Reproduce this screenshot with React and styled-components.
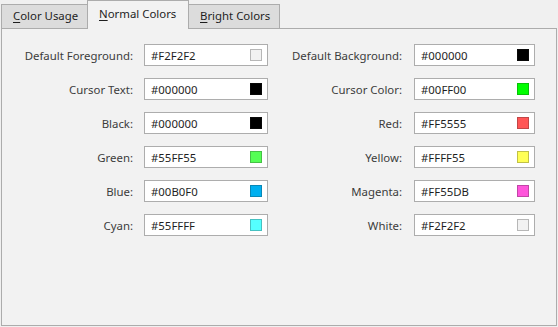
import React from "react";
import styled, { createGlobalStyle } from "styled-components";

const Global = createGlobalStyle`
  html, body { margin: 0; padding: 0; background: #f0f0f0; }
  body { font-family: "Noto Sans", "Liberation Sans", sans-serif; font-size: 11.4px; }
`;

const Window = styled.div`
  width: 558px;
  height: 327px;
  padding: 0 1px 1px 1px;
  box-sizing: border-box;
  display: flex;
  flex-direction: column;
  background: #f0f0f0;
`;

const TabBar = styled.div`
  display: flex;
  align-items: flex-end;
  height: 28px;
  flex: none;
`;

const Tab = styled.div`
  box-sizing: border-box;
  width: ${(p) => p.$w}px;
  height: ${(p) => (p.$active ? 29 : 24)}px;
  margin-left: ${(p) => (p.$first ? 0 : -1)}px;
  margin-bottom: ${(p) => (p.$active ? -1 : 0)}px;
  padding: ${(p) => (p.$active ? "4px" : "2px")} 0 0 11px;
  border: 1px solid #acacac;
  border-bottom: none;
  background: ${(p) => (p.$active ? "#f2f2f2" : "#dcdcdc")};
  color: #1e1e1e;
  font-size: 11.4px;
  line-height: 18px;
  position: relative;
  z-index: ${(p) => (p.$active ? 2 : 1)};
  white-space: nowrap;
  & u { text-underline-offset: 2px; }
`;

const Panel = styled.div`
  flex: 1;
  border: 1px solid #acacac;
  background: #f2f2f2;
  padding: 15px 0 0 0;
`;

const Grid = styled.div`
  display: grid;
  grid-template-columns: 142px 124px 146px 121px;
  row-gap: 12px;
  align-items: center;
`;

const Label = styled.div`
  text-align: right;
  padding-right: ${(p) => p.$pad}px;
  color: #3c3c3c;
  font-size: 11.4px;
  white-space: nowrap;
`;

const Field = styled.div`
  box-sizing: border-box;
  height: 22px;
  border: 1px solid #adadad;
  background: #ffffff;
  display: flex;
  align-items: center;
  justify-content: space-between;
  padding: 0 5px 0 6px;
  color: #1e1e1e;
  font-size: 11.4px;
`;

const Swatch = styled.div`
  width: 12px;
  height: 12px;
  box-sizing: border-box;
  background: ${(p) => p.$c};
  border: 1px solid color-mix(in srgb, ${(p) => p.$c} 72%, #202020);
`;

const rows = [
  ["Default Foreground:", "#F2F2F2", "Default Background:", "#000000"],
  ["Cursor Text:", "#000000", "Cursor Color:", "#00FF00"],
  ["Black:", "#000000", "Red:", "#FF5555"],
  ["Green:", "#55FF55", "Yellow:", "#FFFF55"],
  ["Blue:", "#00B0F0", "Magenta:", "#FF55DB"],
  ["Cyan:", "#55FFFF", "White:", "#F2F2F2"],
];

export default function App() {
  return (
    <>
      <Global />
      <Window>
        <TabBar>
          <Tab $first $w={87}>
            <u>C</u>olor Usage
          </Tab>
          <Tab $active $w={102}>
            <u>N</u>ormal Colors
          </Tab>
          <Tab $w={92}>
            <u>B</u>right Colors
          </Tab>
        </TabBar>
        <Panel>
          <Grid>
            {rows.map(([l1, v1, l2, v2]) => (
              <React.Fragment key={l1}>
                <Label $pad={11}>{l1}</Label>
                <Field>
                  {v1}
                  <Swatch $c={v1} />
                </Field>
                <Label $pad={12}>{l2}</Label>
                <Field>
                  {v2}
                  <Swatch $c={v2} />
                </Field>
              </React.Fragment>
            ))}
          </Grid>
        </Panel>
      </Window>
    </>
  );
}
